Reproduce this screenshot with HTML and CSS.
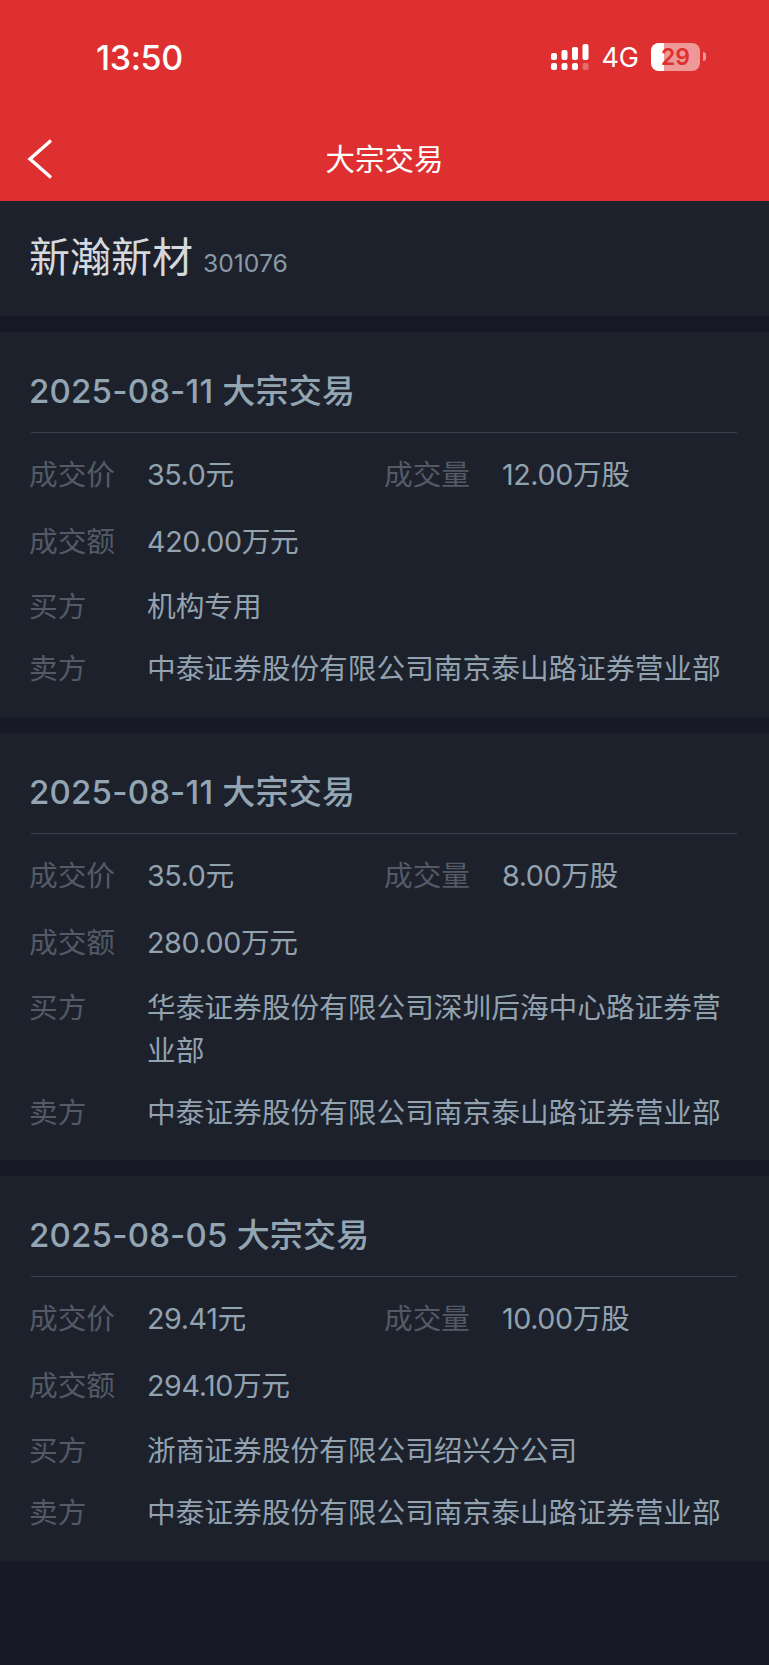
FILE: index.html
```html
<!DOCTYPE html>
<html>
<head>
  <title>大宗交易</title>
  <link rel="stylesheet" href="styles.css">
</head>
<body>
  <div class="top-bar">
    <div class="status-bar">
      <span class="time">13:50</span>
      <div class="status-right">
        <svg class="signal" width="38" height="28" viewBox="0 0 38 28" fill="#fff">
          <rect x="0" y="9" width="6" height="7" rx="2"/>
          <rect x="10.5" y="6" width="6" height="10" rx="2"/>
          <rect x="21" y="3" width="6" height="13" rx="2"/>
          <rect x="31.5" y="0" width="6" height="16" rx="2"/>
          <rect x="0" y="19" width="6" height="7" rx="2"/>
          <rect x="10.5" y="19" width="6" height="7" rx="2"/>
          <rect x="21" y="19" width="6" height="7" rx="2"/>
          <rect x="31.5" y="19" width="6" height="7" rx="2" opacity="0.3"/>
        </svg>
        <span class="network">4G</span>
        <div class="battery">
          <div class="battery-fill"></div>
          <span class="battery-num">29</span>
        </div>
        <div class="battery-tip"></div>
      </div>
    </div>
    <div class="nav-bar">
      <svg class="back" width="26" height="40" viewBox="0 0 26 40" fill="none" stroke="#fff" stroke-width="3.4">
        <path d="M24 1.5 L3 20 L24 38.5"/>
      </svg>
      <span class="nav-title">大宗交易</span>
    </div>
  </div>

  <div class="stock-head">
    <span class="stock-name">新瀚新材</span>
    <span class="stock-code">301076</span>
  </div>

  <div class="card">
    <div class="card-title">2025-08-11 大宗交易</div>
    <div class="row row-top">
      <div class="cell"><span class="label">成交价</span><span class="value">35.0元</span></div>
      <div class="cell"><span class="label">成交量</span><span class="value">12.00万股</span></div>
    </div>
    <div class="row row-amount">
      <div class="cell"><span class="label">成交额</span><span class="value">420.00万元</span></div>
    </div>
    <div class="row"><span class="label">买方</span><span class="value">机构专用</span></div>
    <div class="row"><span class="label">卖方</span><span class="value">中泰证券股份有限公司南京泰山路证券营业部</span></div>
  </div>

  <div class="card">
    <div class="card-title">2025-08-11 大宗交易</div>
    <div class="row row-top">
      <div class="cell"><span class="label">成交价</span><span class="value">35.0元</span></div>
      <div class="cell"><span class="label">成交量</span><span class="value">8.00万股</span></div>
    </div>
    <div class="row row-amount">
      <div class="cell"><span class="label">成交额</span><span class="value">280.00万元</span></div>
    </div>
    <div class="row"><span class="label">买方</span><span class="value">华泰证券股份有限公司深圳后海中心路证券营业部</span></div>
    <div class="row"><span class="label">卖方</span><span class="value">中泰证券股份有限公司南京泰山路证券营业部</span></div>
  </div>

  <div class="card">
    <div class="card-title">2025-08-05 大宗交易</div>
    <div class="row row-top">
      <div class="cell"><span class="label">成交价</span><span class="value">29.41元</span></div>
      <div class="cell"><span class="label">成交量</span><span class="value">10.00万股</span></div>
    </div>
    <div class="row row-amount">
      <div class="cell"><span class="label">成交额</span><span class="value">294.10万元</span></div>
    </div>
    <div class="row"><span class="label">买方</span><span class="value">浙商证券股份有限公司绍兴分公司</span></div>
    <div class="row"><span class="label">卖方</span><span class="value">中泰证券股份有限公司南京泰山路证券营业部</span></div>
  </div>
</body>
</html>
```

FILE: styles.css
```css
/* page */
body {
  margin: 0;
  min-height: 1665px;
  background-color: #171a26;
  font-family: "Inter", "Noto Sans CJK SC", sans-serif;
  overflow: hidden;
}

/* red header */
.top-bar {
  height: 201px;
  background-color: #de3030;
  color: #fff;
}
.status-bar {
  height: 116px;
  display: flex;
  justify-content: space-between;
  padding: 41px 63px 0 96px;
  box-sizing: border-box;
}
.time {
  font-size: 34px;
  font-weight: 500;
  line-height: 34px;
  letter-spacing: -0.4px;
}
.status-right {
  display: flex;
  align-items: flex-start;
  height: 34px;
}
.signal {
  margin-top: 3px;
  margin-right: 12px;
}
.network {
  font-size: 27px;
  line-height: 34px;
  margin-right: 12px;
}
.battery {
  position: relative;
  width: 49px;
  height: 28px;
  margin-top: 2px;
  border-radius: 8px;
  overflow: hidden;
  background-color: rgba(255, 255, 255, 0.5);
}
.battery-fill {
  width: 13px;
  height: 100%;
  background-color: #fff;
}
.battery-num {
  position: absolute;
  top: 0;
  left: 0;
  width: 100%;
  text-align: center;
  font-size: 23px;
  font-weight: 600;
  line-height: 28px;
  color: #de3030;
}
.battery-tip {
  width: 3px;
  height: 9px;
  margin: 11px 0 0 3px;
  border-radius: 0 3px 3px 0;
  background-color: rgba(255, 255, 255, 0.5);
}
.nav-bar {
  position: relative;
  height: 85px;
  text-align: center;
}
.back {
  position: absolute;
  left: 27px;
  top: 23px;
}
.nav-title {
  font-size: 29.5px;
  line-height: 86px;
}

/* stock name */
.stock-head {
  height: 115px;
  padding: 0 29px;
  display: flex;
  align-items: baseline;
  background-color: #1c212c;
}
.stock-name {
  font-size: 41px;
  line-height: 112px;
  color: #d5d8dc;
  margin-right: 10px;
}
.stock-code {
  font-size: 24.7px;
  color: #8a99a8;
}

/* trade cards */
.card {
  margin-top: 16px;
  padding: 0 32px 7.5px 29px;
  background-color: #1c212c;
}
.card-title {
  height: 101px;
  padding-top: 34px;
  box-sizing: border-box;
  border-bottom: 1px solid #3a3f4b;
  margin-left: 2px;
  text-indent: -2px;
  font-size: 33px;
  font-weight: 500;
  line-height: 50px;
  letter-spacing: 0.2px;
  color: #93a5b3;
}
.row {
  display: flex;
  align-items: flex-start;
  padding-bottom: 19px;
  font-size: 28.7px;
  line-height: 43px;
}
.row-top {
  padding-top: 20px;
  padding-bottom: 24px;
}
.row-amount {
  padding-bottom: 22px;
}
.cell {
  display: flex;
  flex: 0 0 355px;
}
.cell .value {
  letter-spacing: -0.4px;
}
.label {
  flex: none;
  width: 118px;
  color: #535a66;
}
.value {
  color: #93a2af;
}
```
